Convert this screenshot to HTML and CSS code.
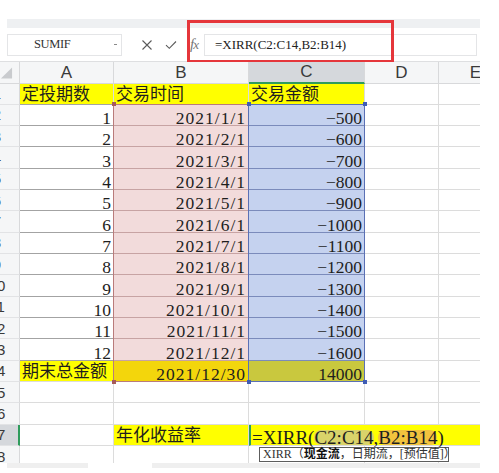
FILE: index.html
```html
<!DOCTYPE html>
<html lang="zh-CN">
<head>
<meta charset="utf-8">
<title>XIRR 定投收益率</title>
<link rel="stylesheet" href="styles.css">
</head>
<body>
<div class="app">
  <div class="band"></div>
  <div class="toolbar">
    <div class="namebox"><span class="name">SUMIF</span><span class="caret"></span></div>
    <div class="tool cancel"><svg width="12" height="12" viewBox="0 0 12 12"><path d="M1.5 1.5L10.5 10.5M10.5 1.5L1.5 10.5" stroke="#5a5a5a" stroke-width="1.1" fill="none"/></svg></div>
    <div class="tool ok"><svg width="12" height="10" viewBox="0 0 12 10"><path d="M1 5.2L4.3 8.3L11 1.5" stroke="#5a5a5a" stroke-width="1.1" fill="none"/></svg></div>
    <div class="fx">f<span>x</span></div>
    <div class="formula">=XIRR(C2:C14,B2:B14)</div>
    <div class="redbox"></div>
  </div>
  <div class="sheet">
    <div class="row head">
      <div class="corner"><svg width="14" height="14" viewBox="0 0 14 14"><path d="M13 1V13H1Z" fill="#c9cbce"/></svg></div>
      <div class="ch">A</div><div class="ch">B</div><div class="ch sel">C</div><div class="ch">D</div><div class="ch">E</div>
    </div>
    <div class="row">
      <div class="rh"><span>1</span></div>
      <div class="c y cj ba">定投期数</div><div class="c y cj ba">交易时间</div><div class="c y cj">交易金额</div><div class="c"></div><div class="c"></div>
    </div>
    <div class="row">
      <div class="rh"><span>2</span></div>
      <div class="c n ba">1</div><div class="c n pk dt">2021/1/1</div><div class="c n bl">−500</div><div class="c"></div><div class="c"></div>
    </div>
    <div class="row">
      <div class="rh"><span>3</span></div>
      <div class="c n ba">2</div><div class="c n pk dt">2021/2/1</div><div class="c n bl">−600</div><div class="c"></div><div class="c"></div>
    </div>
    <div class="row">
      <div class="rh"><span>4</span></div>
      <div class="c n ba">3</div><div class="c n pk dt">2021/3/1</div><div class="c n bl">−700</div><div class="c"></div><div class="c"></div>
    </div>
    <div class="row">
      <div class="rh"><span>5</span></div>
      <div class="c n ba">4</div><div class="c n pk dt">2021/4/1</div><div class="c n bl">−800</div><div class="c"></div><div class="c"></div>
    </div>
    <div class="row">
      <div class="rh"><span>6</span></div>
      <div class="c n ba">5</div><div class="c n pk dt">2021/5/1</div><div class="c n bl">−900</div><div class="c"></div><div class="c"></div>
    </div>
    <div class="row">
      <div class="rh"><span>7</span></div>
      <div class="c n ba">6</div><div class="c n pk dt">2021/6/1</div><div class="c n bl">−1000</div><div class="c"></div><div class="c"></div>
    </div>
    <div class="row">
      <div class="rh"><span>8</span></div>
      <div class="c n ba">7</div><div class="c n pk dt">2021/7/1</div><div class="c n bl">−1100</div><div class="c"></div><div class="c"></div>
    </div>
    <div class="row">
      <div class="rh"><span>9</span></div>
      <div class="c n ba">8</div><div class="c n pk dt">2021/8/1</div><div class="c n bl">−1200</div><div class="c"></div><div class="c"></div>
    </div>
    <div class="row">
      <div class="rh"><span>10</span></div>
      <div class="c n ba">9</div><div class="c n pk dt">2021/9/1</div><div class="c n bl">−1300</div><div class="c"></div><div class="c"></div>
    </div>
    <div class="row">
      <div class="rh"><span>11</span></div>
      <div class="c n ba">10</div><div class="c n pk dt">2021/10/1</div><div class="c n bl">−1400</div><div class="c"></div><div class="c"></div>
    </div>
    <div class="row">
      <div class="rh"><span>12</span></div>
      <div class="c n ba">11</div><div class="c n pk dt">2021/11/1</div><div class="c n bl">−1500</div><div class="c"></div><div class="c"></div>
    </div>
    <div class="row">
      <div class="rh"><span>13</span></div>
      <div class="c n ba">12</div><div class="c n pk dt">2021/12/1</div><div class="c n bl">−1600</div><div class="c"></div><div class="c"></div>
    </div>
    <div class="row">
      <div class="rh"><span>14</span></div>
      <div class="c y cj">期末总金额</div><div class="c n gd dt">2021/12/30</div><div class="c n ol">14000</div><div class="c"></div><div class="c"></div>
    </div>
    <div class="row">
      <div class="rh"><span>15</span></div>
      <div class="c"></div><div class="c"></div><div class="c"></div><div class="c"></div><div class="c"></div>
    </div>
    <div class="row">
      <div class="rh"><span>16</span></div>
      <div class="c"></div><div class="c"></div><div class="c"></div><div class="c"></div><div class="c"></div>
    </div>
    <div class="row">
      <div class="rh sel"><span>17</span></div>
      <div class="c"></div><div class="c y cj">年化收益率</div>
      <div class="c edit">=XIRR(<span class="r1">C2:C14</span>,<span class="r2">B2:B14</span>)</div>
    </div>
    <div class="row">
      <div class="rh"><span>18</span></div>
      <div class="c"></div><div class="c"></div><div class="c"></div><div class="c"></div><div class="c"></div>
    </div>

    <div class="range rb"><i class="h tl"></i><i class="h tr"></i><i class="h bl2"></i><i class="h br"></i></div>
    <div class="range rc"><i class="h tl"></i><i class="h tr"></i><i class="h bl2"></i><i class="h br"></i></div>
    <div class="tip">XIRR（<b>现金流</b>，日期流，[预估值]）</div>
  </div>
  <div class="tabs"><div class="tab t1"></div><div class="tab t2"></div></div>
</div>
</body>
</html>
```

FILE: styles.css
```css
* { box-sizing: border-box; margin: 0; padding: 0; }
body { background: #fff; font-family: "Liberation Serif", "Noto Sans CJK SC", serif; color: #1e1e1e; }
.app { position: relative; width: 499px; height: 473px; overflow: hidden; padding-top: 19px; }

.band { width: 473px; height: 9px; margin-left: 7px; background: #eef0f2; }

.toolbar { display: flex; align-items: center; width: 480px; height: 34px; border-bottom: 1px solid #dedfe1; }
.namebox { display: flex; align-items: center; flex: none; width: 115px; height: 22px; margin-left: 7px; padding-left: 26px; background: #fff; border: 1px solid #e4e5e7; }
.name { font-size: 12.5px; letter-spacing: -0.4px; color: #333; }
.caret { margin-left: auto; margin-right: 4px; width: 3px; height: 1.5px; background: #8a8a8a; }
.tool { display: flex; flex: none; }
.cancel { margin-left: 19px; }
.ok { margin-left: 12px; }
.fx { flex: none; margin-left: 13px; font-style: italic; font-size: 15px; color: #777; letter-spacing: -1px; }
.fx span { font-size: 13px; }
.formula { flex: none; display: flex; align-items: center; width: 273px; height: 22px; margin-left: 6px; padding-left: 10px; background: #fff; border: 1px solid #e4e5e7; font-size: 13px; color: #222; }
.redbox { position: absolute; left: 187px; top: 20px; width: 207px; height: 43px; border: 3.5px solid #e5363b; }

.sheet { position: relative; width: 480px; height: 401px; overflow: hidden; }
.row { display: grid; grid-template-columns: 20px 94px 135px 116px 74px 74px; height: 21.33px; }
.row.head { height: 21.5px; }

.corner { display: flex; align-items: center; justify-content: flex-end; padding-right: 6px; background: #f5f6f7; border-right: 1px solid #d8d9db; border-bottom: 1px solid #d8d9db; }
.ch { display: flex; align-items: center; justify-content: center; background: #f5f6f7; border-right: 1px solid #d8d9db; border-bottom: 1px solid #d8d9db; font-family: "Liberation Sans", sans-serif; font-size: 17px; color: #3a3a3a; }
.ch.sel { background: #d5d8dc; border-bottom: 2px solid #2f9c5c; }

.rh { display: flex; align-items: center; overflow: visible; background: #f5f6f7; border-right: 1px solid #d8d9db; border-bottom: 1px solid #e2e3e5; font-family: "Liberation Sans", sans-serif; font-size: 15px; color: #3a3a3a; }
.rh span { flex: none; width: 34px; margin-left: -20px; text-align: center; }
.rh.sel { background: #d5d8dc; border-right: 2px solid #2f9c5c; }

.c { display: flex; align-items: flex-end; padding: 0 2px; font-size: 17.5px; line-height: 14px; white-space: nowrap; border-right: 1px solid #dcdcdc; border-bottom: 1px solid #dcdcdc; }
.n { justify-content: flex-end; }
.cj { font-size: 17px; padding-bottom: 2px; padding-left: 2px; }
.dt { letter-spacing: 1px; padding-right: 2px; }
.ba { border-bottom-color: #a3a3a3; }
.y { background: #ffff00; }
.pk { background: #f2dbdb; border-bottom-color: #c7a3a3; }
.bl { background: #c5d2ef; border-bottom-color: #7b8bbb; }
.gd { background: #f3d60c; }
.ol { background: #c9c83e; }

.edit { grid-column: span 3; background: #ffff00; font-size: 19px; line-height: 15px; padding-left: 1px; border-left: 2px solid #2f9c5c; border-right: none; }
.r1 { background: #d9d36a; border-radius: 7px; }
.r2 { background: #f2c33e; border-radius: 7px; }

.range { position: absolute; top: 41.8px; height: 278.3px; border: 1px solid; }
.rb { left: 113px; width: 136px; border-color: #b97b7b; }
.rc { left: 248px; width: 117px; border-color: #5a70b5; }
.h { position: absolute; width: 4px; height: 4px; }
.rb .h { background: #a65a5a; }
.rc .h { background: #3f5db5; }
.tl { left: -2.5px; top: -2.5px; }
.tr { right: -2.5px; top: -2.5px; }
.bl2 { left: -2.5px; bottom: -2.5px; }
.br { right: -2.5px; bottom: -2.5px; }

.tip { position: absolute; left: 259px; top: 385px; width: 190px; height: 15px; padding-left: 3px; background: #fff; border: 1px solid #5d5d5d; font-size: 12px; line-height: 13px; color: #333; white-space: nowrap; }
.tip b { font-weight: bold; color: #111; }

.tabs { display: flex; width: 480px; height: 10px; background: #fff; }
.tab { height: 5px; background: #efefef; }
.t1 { width: 81px; margin-left: 7px; }
.t2 { width: 328px; margin-left: 64px; }
```
